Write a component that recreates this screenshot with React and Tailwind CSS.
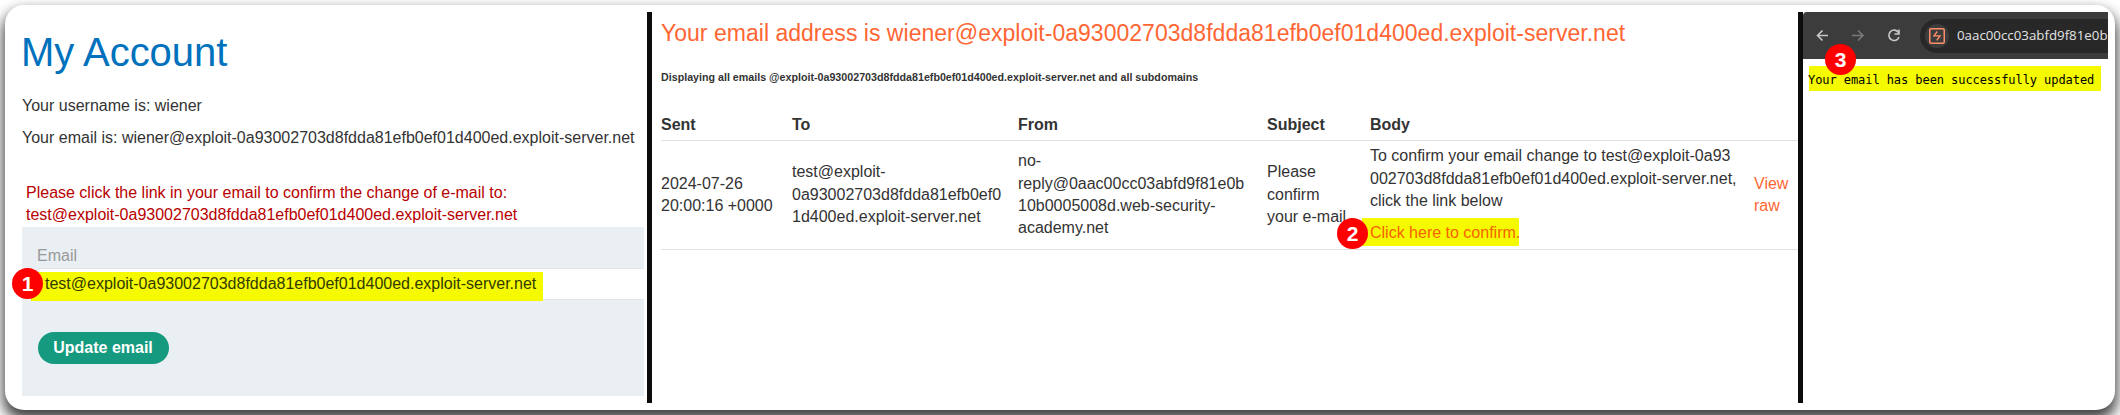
const DOMAIN = "exploit-0a93002703d8fdda81efb0ef01d400ed.exploit-server.net";

function Badge({ n, className }) {
  return (
    <span className={`absolute flex size-[31px] items-center justify-center rounded-full bg-[#ff0000] text-[21px] leading-none font-bold text-white ${className}`}>
      {n}
    </span>
  );
}

function AccountPanel() {
  return (
    <section className="relative w-[642px] shrink-0 pt-[17px] pl-[17px]">
      <h1 className="-ml-px text-[40px] leading-[46px] tracking-[-0.05px] text-[#0071bd]">My Account</h1>
      <p className="mt-[15px] leading-[32px]">Your username is: wiener</p>
      <p className="leading-[32px]">Your email is: wiener@{DOMAIN}</p>
      <div className="mt-[28px] pl-1 leading-[22px] text-[#b80000]">
        <p>Please click the link in your email to confirm the change of e-mail to:</p>
        <p>test@{DOMAIN}</p>
      </div>
      <form className="mt-px mr-[3px] h-[169px] bg-[#e9eff2] pt-[17px] pl-4">
        <label className="-ml-px block h-6 leading-[24px] text-[#999]">Email</label>
        <div className="relative h-8 border border-r-0 border-[#e1e5e6] bg-white pl-[6px]">
          <span className="absolute top-[3px] -left-[8px] h-[29px] w-[512px] bg-[#f6fa00]" />
          <span className="relative block leading-[30px] text-[#333a00]">test@{DOMAIN}</span>
          <Badge n="1" className="-top-px -left-[27px]" />
        </div>
        <button type="button" className="mt-8 block h-8 w-[131px] rounded-full bg-[#159a80] pr-px font-bold text-white">Update email</button>
      </form>
    </section>
  );
}

function MailPanel() {
  return (
    <section className="w-[1146px] shrink-0 pt-[5px] pl-[9px]">
      <h2 className="text-[23px] leading-[32px] tracking-[0.02px] text-[#ff6633]">Your email address is wiener@{DOMAIN}</h2>
      <p className="mt-[18px] text-[10.7px] leading-[20px] font-bold">Displaying all emails @{DOMAIN} and all subdomains</p>
      <div className="mt-[27px] grid grid-cols-[131px_226px_249px_103px_384px_44px] border-b border-[#e2e2e2] pb-[4px] leading-[22px] font-bold">
        <span>Sent</span><span>To</span><span>From</span><span>Subject</span><span>Body</span>
      </div>
      <div className="grid h-[109px] grid-cols-[131px_226px_249px_103px_384px_44px] items-center border-b border-[#e2e2e2] leading-[22.4px] whitespace-nowrap">
        <div>2024-07-26<br />20:00:16 +0000</div>
        <div>test@exploit-<br />0a93002703d8fdda81efb0ef0<br />1d400ed.exploit-server.net</div>
        <div>no-<br />reply@0aac00cc03abfd9f81e0b<br />10b0005008d.web-security-<br />academy.net</div>
        <div>Please<br />confirm<br />your e-mail</div>
        <div className="pt-px">
          To confirm your email change to test@exploit-0a93<br />002703d8fdda81efb0ef01d400ed.exploit-server.net,<br />click the link below
          <div className="relative mt-[5px] h-7 w-[149px]">
            <span className="absolute inset-y-0 right-0 -left-2 bg-[#f6fa00]" />
            <a className="relative leading-[30px] text-[#f66200]">Click here to confirm.</a>
            <Badge n="2" className="top-0 -left-[33px]" />
          </div>
        </div>
        <div className="text-[#ff6633]">View<br />raw</div>
      </div>
    </section>
  );
}

function BrowserPanel() {
  return (
    <section className="relative w-[305px] shrink-0">
      <div className="flex h-[47px] items-center rounded-tl-[4px] bg-[#3c3c3c]">
        <svg className="ml-[13px] h-4 w-[84px] shrink-0" viewBox="0 0 84 16" fill="none" strokeWidth="1.6">
          <path d="M12 7.500H2M6.500 2.500L1.500 7.500l5 5" stroke="#c7c7c7" />
          <path d="M36 7.500h10.500M42 2.500l5 5-5 5" stroke="#7a7a7a" />
          <path d="M82.500 4.500A5.200 5.200 0 1 0 83 9M83 1.500v4.500h-4.500" stroke="#c7c7c7" />
        </svg>
        <div className="ml-[20px] flex h-[34px] min-w-0 flex-1 items-center overflow-hidden rounded-l-full bg-[#282828]">
          <span className="ml-[5px] flex size-6 shrink-0 items-center justify-center rounded-full bg-[#3c3c3c]">
            <svg className="size-4" viewBox="0 0 16 16" fill="none" stroke="#ff8f68" strokeWidth="1.500">
              <rect x=".75" y=".75" width="14.500" height="14.500" rx="1.500" />
              <path d="M8.300 3.500L5 7.900h6L7.700 12.300" strokeWidth="1.400" />
            </svg>
          </span>
          <span className="ml-[8px] font-['Open_Sans',sans-serif] text-[13.3px] whitespace-nowrap text-[#e3e3e3]">0aac00cc03abfd9f81e0b</span>
        </div>
      </div>
      <p className="mt-[7px] ml-[6px] h-[25px] w-[292px] bg-[#f6fa00] font-['DejaVu_Sans_Mono',monospace] -indent-px text-[12px] leading-[28px] tracking-[-0.07px] whitespace-nowrap text-black">
        Your email has been successfully updated
      </p>
      <Badge n="3" className="top-[32px] left-[22px]" />
    </section>
  );
}

export default function App() {
  return (
    <main className="h-[415px] w-[2120px] overflow-hidden bg-white p-[5px] font-['Liberation_Sans',Arial,sans-serif] text-[16px] text-[#333]">
      <div className="flex h-[405px] rounded-[19px] bg-white py-[7px] shadow-[0_8px_14px_2px_rgba(0,0,0,0.75)]">
        <AccountPanel />
        <div className="w-[5px] shrink-0 bg-[#0c0c0c]" />
        <MailPanel />
        <div className="w-[5px] shrink-0 bg-[#0c0c0c]" />
        <BrowserPanel />
      </div>
    </main>
  );
}
